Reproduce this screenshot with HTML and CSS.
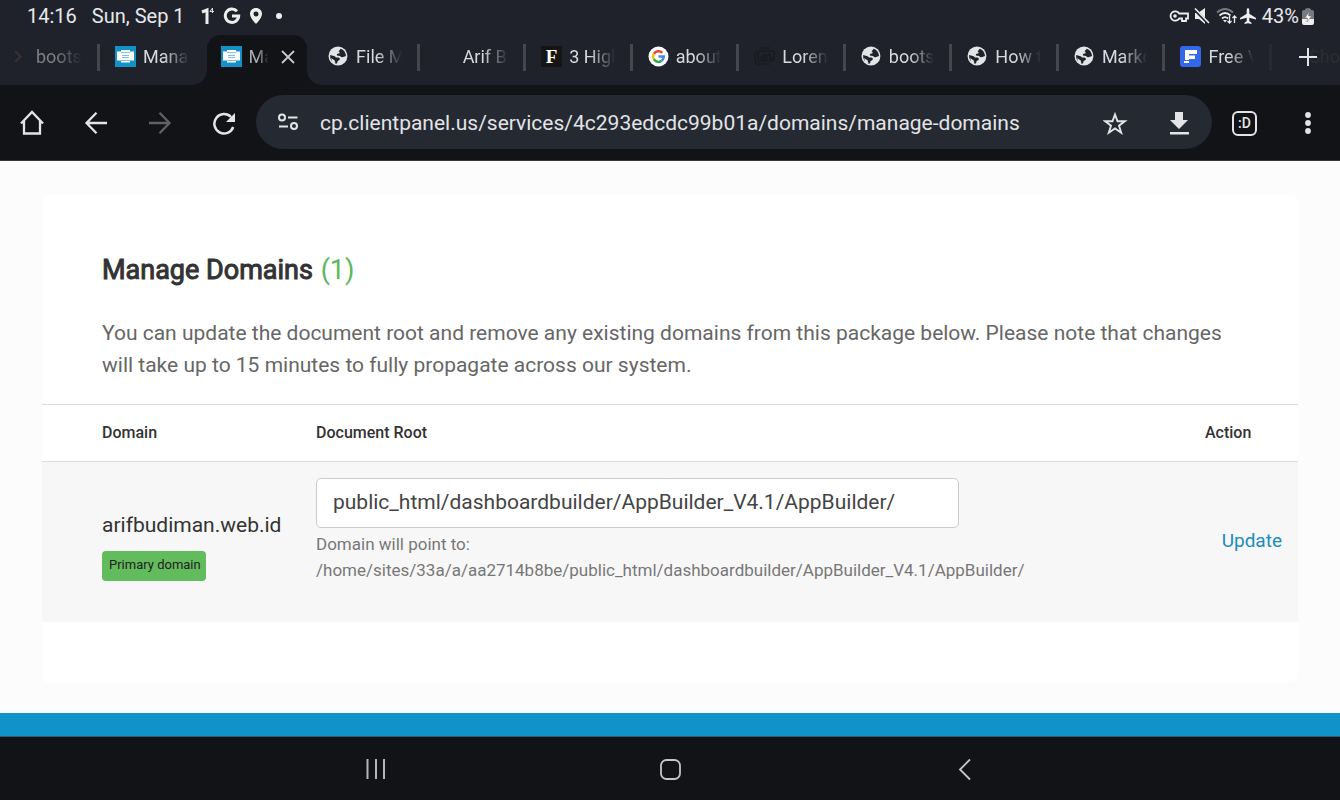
FILE: index.html
```html
<!DOCTYPE html>
<html lang="en">
<head>
<meta charset="utf-8">
<title>Manage Domains</title>
<meta name="viewport" content="width=device-width, initial-scale=1">
<link rel="stylesheet" href="styles.css">
</head>
<body>
<svg class="defs" aria-hidden="true">
  <symbol id="globe" viewBox="0 0 20 20">
    <circle cx="9.500" cy="9.500" r="9" fill="#e3e4e6"/>
    <path fill="#1f222b" d="M12 2.600Q16.800 4.300 17.200 9.500L14.500 10.500Q12.500 11 11.500 9.500L8.500 9V7.500L11 7Q11.500 5.500 10 5Q11.500 4 12 2.600Z"/>
    <path fill="#1f222b" d="M2 8.500L5.500 9.500Q7 9.700 7.500 11H10Q11.800 11.500 11.200 13L9 14.500Q9.300 16 8 17Q3.500 15.800 2.200 11.500Z"/>
    <path fill="#e3e4e6" d="M3 11.500L6 13.500L7 15.500L6.500 17L4 15.500Z"/>
  </symbol>
  <symbol id="panel" viewBox="0 0 21 21">
    <path fill="#1491c8" d="M0 0H21V21H0Z"/>
    <path fill="#fff" d="M6 4H15V5.500H19V14.500H15V16.500H6V14.500H2V5.500H6Z"/>
    <path fill="none" stroke="#7cc3e1" d="M6 6.500H15M7 9.500H14M7 11.500H14M6 14.500H15"/>
  </symbol>
</svg>

<header class="browser">
  <div class="status">
    <div class="status-group">
      <span class="clock">14:16</span>
      <span class="date">Sun, Sep 1</span>
      <svg class="i-one" viewBox="0 0 14 20"><path d="M1 6L6 4V18" fill="none" stroke="#eee" stroke-width="3"/><path d="M11.500 7V2L9 5.500H13" fill="none" stroke="#ddd"/></svg>
      <svg class="i-g" viewBox="0 0 18 18"><path d="M14 4.200A6.700 6.700 0 1 0 15.700 9H9" fill="none" stroke="#eee" stroke-width="3"/></svg>
      <svg class="i-pin" viewBox="0 0 14 18"><path fill="#eee" fill-rule="evenodd" d="M7 1C3.500 1 1 3.500 1 7C1 11 7 17 7 17S13 11 13 7C13 3.500 10.500 1 7 1ZM7 4.500A2.500 2.500 0 1 1 7 9.500A2.500 2.500 0 0 1 7 4.500Z"/></svg>
      <span class="dot"></span>
    </div>
    <div class="status-group status-right">
      <svg class="i-key" viewBox="0 0 20 14"><path d="M10.200 4.500A4.700 4.700 0 1 0 10.200 9.500H13V12H17V9.500H19V4.500Z" fill="none" stroke="#eee" stroke-width="1.800"/><circle cx="6" cy="7" r="1.800" fill="#eee"/></svg>
      <svg class="i-mute" viewBox="0 0 16 16"><path fill="#eee" d="M1 5H4L11 0V16L5 11H1Z"/><path d="M0 1L15 16" stroke="#1f222b" stroke-width="3"/><path d="M1 0.500L15 15" stroke="#eee" stroke-width="1.600"/></svg>
      <svg class="i-wifi" viewBox="0 0 22 18"><path d="M1 5.500Q9 -1.500 17 5.500" fill="none" stroke="#777a80" stroke-width="1.800"/><path d="M3.500 8.500Q9 3.500 14.500 8.500M6 11.500Q9 8.800 12 11.500" fill="none" stroke="#eee" stroke-width="1.800"/><path fill="#eee" d="M7 13L9 15.500L11 13Z"/><path d="M13.500 9V16M11.500 14L13.500 16L15.500 14M18.500 16V9M16.500 11L18.500 9L20.500 11" fill="none" stroke="#eee" stroke-width="1.300"/></svg>
      <svg class="i-plane" viewBox="0 0 16 16"><path fill="#eee" d="M8 0Q9.300 0.500 9.300 2V5.800L16 10V11.500L9.300 9.800V13L11.500 14.700V16L8 15.200L4.500 16V14.700L6.700 13V9.800L0 11.500V10L6.700 5.800V2Q6.700 0.500 8 0Z"/></svg>
      <span class="percent">43%</span>
      <svg class="i-battery" viewBox="0 0 12 17"><path fill="#777a80" d="M3 2Q3 0 6 0T9 2H10Q12 2 12 4V11H0V4Q0 2 2 2Z"/><path fill="#eee" d="M0 11H12V15Q12 17 10 17H2Q0 17 0 15Z"/><path fill="#fff" stroke="#777a80" stroke-width="0.600" d="M7 4L3 10H5.500L5 14L9.500 8H6.500Z"/></svg>
    </div>
  </div>

  <nav class="tabs" aria-label="Open tabs">
    <div class="tab tab-first"><svg class="fav dim" viewBox="0 0 20 20"><path d="M7 5L12 10L7 15" fill="none" stroke="#6b5046" stroke-width="2"/></svg><span class="title dimmed">boots</span></div>
    <div class="tab"><svg class="fav"><use href="#panel"/></svg><span class="title">Mana</span></div>
    <div class="tab active"><svg class="fav"><use href="#panel"/></svg><span class="title">Ma</span><button class="close" aria-label="Close tab"><svg viewBox="0 0 14 14"><path d="M1 1L13 13M13 1L1 13" stroke="#c8c9cc" stroke-width="1.800"/></svg></button></div>
    <div class="tab no-line"><svg class="fav"><use href="#globe"/></svg><span class="title">File M</span></div>
    <div class="tab"><span class="fav"></span><span class="title">Arif B</span></div>
    <div class="tab"><span class="fav fav-f">F</span><span class="title">3 Higl</span></div>
    <div class="tab"><svg class="fav" viewBox="0 0 21 21"><circle cx="10.500" cy="10.500" r="10" fill="#fff"/><g fill="none" stroke-width="2.500"><path stroke="#ea4335" d="M5.900 7.800A5.300 5.300 0 0 1 14.300 6.800"/><path stroke="#fbbc05" d="M5.900 13.200A5.300 5.300 0 0 1 5.900 7.800"/><path stroke="#34a853" d="M13.700 14.800A5.300 5.300 0 0 1 5.900 13.200"/><path stroke="#4285f4" d="M10.500 10.500H15.800A5.300 5.300 0 0 1 13.700 14.800"/></g></svg><span class="title">about</span></div>
    <div class="tab"><svg class="fav" viewBox="0 0 21 21"><path d="M6 5H18Q20 5 20 7V13Q20 15 18 15H6Q4 15 4 13V7Q4 5 6 5ZM5 2H16M2 6L1 8V15Q1 18 4 18H16M7 13L10 9L12 11L15 8L18 13Z" fill="none" stroke="#191b20" stroke-width="1.500"/></svg><span class="title">Loren</span></div>
    <div class="tab"><svg class="fav"><use href="#globe"/></svg><span class="title">boots</span></div>
    <div class="tab"><svg class="fav"><use href="#globe"/></svg><span class="title">How t</span></div>
    <div class="tab"><svg class="fav"><use href="#globe"/></svg><span class="title">Marke</span></div>
    <div class="tab"><svg class="fav" viewBox="0 0 21 21"><rect width="21" height="21" rx="3" fill="#3368e8"/><path fill="#fff" d="M5 4H17V8H9V9.500H15V13H9V14H5ZM4 15H9V17H4Z"/></svg><span class="title">Free V</span></div>
    <div class="tab tab-last"><span class="ghost">Sho</span><button class="new-tab" aria-label="New tab"><svg viewBox="0 0 18 18"><path d="M9 0V18M0 9H18" stroke="#e3e4e6" stroke-width="2"/></svg></button></div>
  </nav>

  <div class="toolbar">
    <button class="tool" aria-label="Home"><svg viewBox="0 0 26 26"><path d="M2 14.500L13 3L24 14.500M5 12V24.500H21V12" fill="none" stroke="#e3e4e6" stroke-width="2.300"/></svg></button>
    <button class="tool" aria-label="Back"><svg viewBox="0 0 26 26"><path d="M24 14H4M13.500 3.800L3.500 14L13.500 24.200" fill="none" stroke="#e3e4e6" stroke-width="2.300"/></svg></button>
    <button class="tool" aria-label="Forward" disabled><svg viewBox="0 0 26 26"><path d="M2 14H22M12.500 3.800L22.500 14L12.500 24.200" fill="none" stroke="#606165" stroke-width="2.300"/></svg></button>
    <button class="tool" aria-label="Reload"><svg viewBox="0 0 26 26"><path d="M22.200 18A9.700 9.700 0 1 1 20 8" fill="none" stroke="#e3e4e6" stroke-width="2.500"/><path fill="#e3e4e6" d="M24 4V13H15Z"/></svg></button>
    <div class="address">
      <button class="tool" aria-label="Site information"><svg viewBox="0 0 26 26"><g fill="none" stroke="#e3e4e6" stroke-width="2"><circle cx="7" cy="8.500" r="3"/><path d="M13 8.500H22.500M4 17.500H13"/><circle cx="19" cy="17" r="3"/></g></svg></button>
      <input class="url" aria-label="Address" value="cp.clientpanel.us/services/4c293edcdc99b01a/domains/manage-domains">
      <button class="tool" aria-label="Bookmark"><svg viewBox="0 0 26 26"><path d="M12 5.500L14.500 12.300H21.800L16 16.700L18.200 23.700L12 19.500L5.800 23.700L8 16.700L2.200 12.300H9.500Z" fill="none" stroke="#e3e4e6" stroke-width="1.900"/></svg></button>
      <button class="tool" aria-label="Download"><svg viewBox="0 0 26 26"><path fill="#e3e4e6" d="M8 3H16V11H21L12 20L3 11H8ZM3 23H22V25.500H3Z"/></svg></button>
    </div>
    <button class="tool count" aria-label="Tab switcher"><span class="count-box">:D</span></button>
    <button class="tool" aria-label="Menu"><svg viewBox="0 0 26 26"><g fill="#e3e4e6"><circle cx="13" cy="6" r="2.900"/><circle cx="13" cy="14" r="2.900"/><circle cx="13" cy="22" r="2.900"/></g></svg></button>
  </div>
</header>

<main class="page">
  <section class="card">
    <div class="intro">
      <h1>Manage Domains <span class="total">(1)</span></h1>
      <p>You can update the document root and remove any existing domains from this package below. Please note that changes will take up to 15 minutes to fully propagate across our system.</p>
    </div>
    <table class="domains">
      <thead><tr><th class="col-domain">Domain</th><th>Document Root</th><th class="col-action">Action</th></tr></thead>
      <tbody>
        <tr>
          <td class="col-domain"><div class="name">arifbudiman.web.id</div><span class="badge">Primary domain</span></td>
          <td class="col-root">
            <input class="root" id="root" aria-label="Document Root" value="public_html/dashboardbuilder/AppBuilder_V4.1/AppBuilder/">
            <label class="help" for="root">Domain will point to:<br>/home/sites/33a/a/aa2714b8be/public_html/dashboardbuilder/AppBuilder_V4.1/AppBuilder/</label>
          </td>
          <td class="col-action"><a class="update" href="#">Update</a></td>
        </tr>
      </tbody>
    </table>
  </section>
</main>

<footer class="footer"></footer>
<nav class="system" aria-label="System navigation">
  <button aria-label="Recent apps"><svg viewBox="0 0 24 24"><path d="M4.500 2V22M13 2V22M21 2V22" stroke="#b5b6b8" stroke-width="2"/></svg></button>
  <button aria-label="Home screen"><svg viewBox="0 0 24 24"><rect x="3" y="3" width="19" height="19" rx="5.500" fill="none" stroke="#c5c6c8" stroke-width="1.800"/></svg></button>
  <button aria-label="Back"><svg viewBox="0 0 24 24"><path d="M17 2.500L7 12.500L17 22.500" fill="none" stroke="#c5c6c8" stroke-width="1.800"/></svg></button>
</nav>
</body>
</html>
```

FILE: styles.css
```css
* { box-sizing: border-box; }

body {
  margin: 0;
  min-height: 100vh;
  display: flex;
  flex-direction: column;
  background: #fcfcfc;
  color: #333;
  font-family: Roboto, "Liberation Sans", sans-serif;
}

button {
  padding: 0;
  border: 0;
  background: none;
  color: inherit;
  font-family: inherit;
}

svg { display: block; }
.defs { position: absolute; width: 0; height: 0; }

/* Status bar */
.browser { background: #1f222b; color: #e8e9eb; }
.status {
  display: flex;
  justify-content: space-between;
  height: 35px;
  padding: 0 26px 3px 27px;
  font-size: 20px;
}
.status-group { display: flex; align-items: center; }
.date { margin: 0 16px 0 15px; }
.i-one { width: 14px; height: 20px; }
.i-g { width: 18px; height: 18px; margin: 0 8px; }
.i-pin { width: 14px; height: 18px; }
.dot { width: 6px; height: 6px; margin-left: 13px; border-radius: 50%; background: #eee; }
.i-key { width: 20px; height: 14px; margin-right: 5px; }
.i-mute { width: 16px; height: 16px; margin-right: 6px; }
.i-wifi { width: 22px; height: 18px; margin-right: 2px; }
.i-plane { width: 16px; height: 16px; margin-right: 6px; }
.i-battery { width: 12px; height: 17px; margin-left: 3px; }

/* Tab strip */
.tabs {
  display: grid;
  grid-template-columns: 97px repeat(11, minmax(0, 1fr)) 71px;
  height: 50px;
}
.tab {
  position: relative;
  display: flex;
  align-items: center;
  gap: 7px;
  min-width: 0;
  padding: 0 12px 7px 18px;
  font-size: 18px;
}
.tab::before {
  content: "";
  position: absolute;
  left: 0;
  top: 9px;
  width: 3px;
  height: 27px;
  background: #45474e;
}
.tab-first::before, .active::before, .no-line::before { display: none; }
.tab-first { padding-left: 8px; }
.fav { flex: none; width: 21px; height: 21px; }
.dim { opacity: 0.35; }
.title {
  flex: 1;
  min-width: 0;
  overflow: hidden;
  white-space: nowrap;
  line-height: 24px;
  color: #d8d9dc;
  mask-image: linear-gradient(to right, #000 42%, transparent 94%);
}
.dimmed { opacity: 0.5; }
.fav-f {
  background: #171513;
  color: #fff;
  font: bold 19px/21px "Liberation Serif", serif;
  text-align: center;
}
.active { padding-right: 11px; padding-left: 17px; z-index: 1; }
.active::after {
  content: "";
  position: absolute;
  z-index: -1;
  inset: 0 3px;
  border-radius: 14px 14px 0 0;
  background: #121317;
}
.active::before {
  display: block;
  z-index: -1;
  left: -11px;
  right: -11px;
  top: 36px;
  width: auto;
  height: 14px;
  background:
    radial-gradient(circle at 0 0, transparent 13px, #121317 14px) left / 14px 14px no-repeat,
    radial-gradient(circle at 100% 0, transparent 13px, #121317 14px) right / 14px 14px no-repeat;
}
.active .title { color: #aaabad; }
.close { width: 22px; height: 22px; display: grid; place-items: center; }
.close svg { width: 14px; height: 14px; }
.tab-last { padding: 0 0 7px; }
.tab-last::before { opacity: 0.2; }
.ghost { position: absolute; right: 0; color: #2b2d35; }
.new-tab { margin-left: auto; margin-right: 23px; position: relative; }
.new-tab svg { width: 18px; height: 18px; }

/* Toolbar */
.toolbar {
  display: flex;
  align-items: center;
  height: 76px;
  padding-bottom: 1px;
  background: #121317;
  border-bottom: 1px solid #3b393e;
}
.tool { flex: none; width: 64px; height: 54px; display: grid; place-items: center; }
.tool svg { width: 26px; height: 26px; }
.address {
  flex: 1;
  min-width: 0;
  display: flex;
  align-items: center;
  height: 54px;
  border-radius: 27px;
  background: #252932;
}
.url {
  flex: 1;
  min-width: 0;
  padding: 2px 0 0;
  border: 0;
  outline: 0;
  background: none;
  color: #e3e4e6;
  font: 21px/28px Roboto, sans-serif;
}
.count { padding: 2px 0 0 1px; }
.count-box {
  display: grid;
  place-items: center;
  width: 25px;
  height: 25px;
  border: 2px solid #e3e4e6;
  border-radius: 6px;
  color: #e3e4e6;
  font-size: 14px;
  font-weight: 500;
}

/* Page content */
.page { flex: 1; padding: 34px 42px 31px; }
.card { height: 100%; padding-bottom: 60px; border-radius: 6px; background: #fff; }
.intro { padding: 56px 60px 23px; }
h1 {
  margin: 0;
  font-size: 27px;
  font-weight: 400;
  line-height: 38px;
  -webkit-text-stroke: 1px #333;
}
.total { margin-left: 1px; color: #5cb85c; -webkit-text-stroke: 0; }
.intro p { margin: 28px 0 0; color: #666; font-size: 21px; line-height: 32px; }

.domains { width: 100%; border-collapse: separate; border-spacing: 0; table-layout: fixed; }
th {
  height: 58px;
  padding: 0 16px 2px;
  border: solid #dcdcdc;
  border-width: 1px 0;
  font-size: 16px;
  font-weight: 500;
  text-align: left;
}
td { padding: 16px; background: #f7f7f7; }
.col-domain { width: 258px; padding-left: 60px; padding-right: 0; }
.col-action { width: 109px; }
.name { margin-top: 8px; font-size: 21px; line-height: 28px; }
.badge {
  display: inline-block;
  margin-top: 12px;
  padding: 1px 5px 3px 7px;
  border-radius: 4px;
  background: #62bb5c;
  color: #222;
  font-size: 13px;
  line-height: 26px;
}
.col-root { padding-bottom: 39px; }
.root {
  display: block;
  width: 75%;
  height: 50px;
  padding: 0 16px 2px;
  border: 1px solid #ccc;
  border-radius: 5px;
  background: #fff;
  color: #444;
  font: 21px Roboto, sans-serif;
}
.help { display: block; margin-top: 3px; color: #777; font-size: 17px; line-height: 26px; }
td.col-action { padding-bottom: 20px; text-align: right; }
.update { color: #1b8dbd; font-size: 19px; text-decoration: none; }

.footer { height: 24px; background: #1192c9; border-bottom: 1px solid #2d5d73; }

/* Device navigation */
.system {
  display: grid;
  grid-template-columns: repeat(3, 22%);
  justify-content: center;
  height: 63px;
  background: #121317;
}
.system button { display: grid; place-items: center; }
.system svg { width: 24px; height: 24px; }
```
